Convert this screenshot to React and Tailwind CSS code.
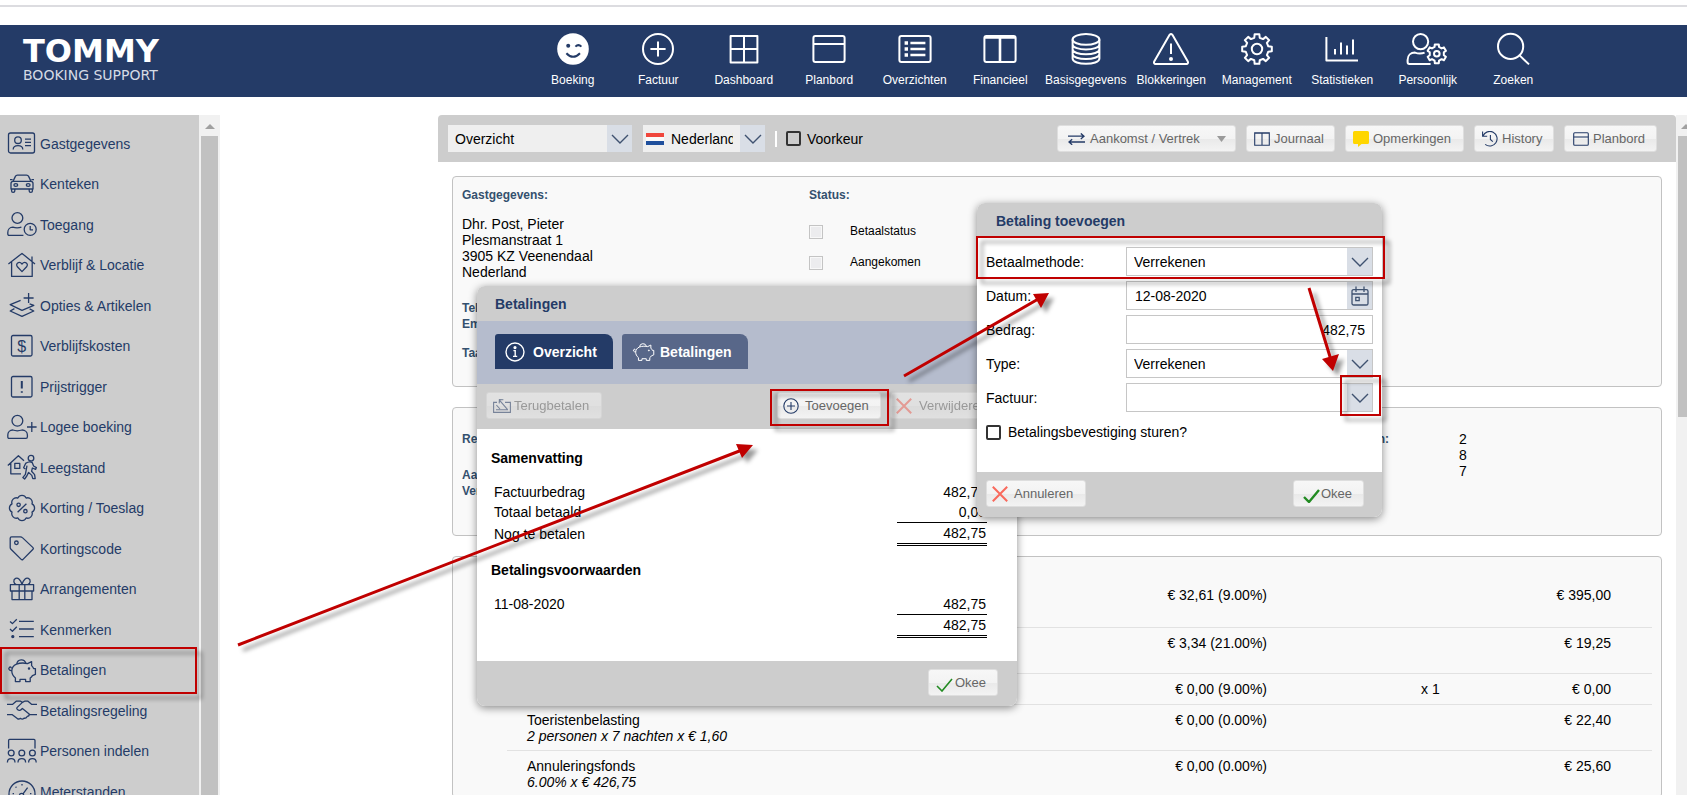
/**
 * Tommy Booking Support
 *
 * Boekingsoverzicht met de dialogen voor betalingen
 */

import React, { useState } from 'react';
import clsx from 'clsx';

// Closed outline of a toothed wheel around (cx, cy)
const gearPath = (cx, cy, outer, inner, teeth) => {
  const step = (Math.PI * 2) / teeth;
  const points = [];
  for (let i = 0; i < teeth; i++) {
    const mid = i * step - Math.PI / 2;
    [
      [-0.3, inner],
      [-0.2, outer],
      [0.2, outer],
      [0.3, inner]
    ].forEach(([t, r]) => {
      const a = mid + t * step;
      points.push(`${(cx + r * Math.cos(a)).toFixed(2)} ${(cy + r * Math.sin(a)).toFixed(2)}`);
    });
  }
  return `M${points.join('L')}Z`;
};

// Scalloped badge outline around (cx, cy)
const badgePath = (cx, cy, radius, bumps) => {
  const step = (Math.PI * 2) / bumps;
  const point = i => {
    const a = (i + 0.5) * step;
    return `${(cx + radius * Math.cos(a)).toFixed(2)} ${(cy + radius * Math.sin(a)).toFixed(2)}`;
  };
  let d = `M${point(0)}`;
  for (let i = 1; i <= bumps; i++) d += `A4.6 4.6 0 0 1 ${point(i)}`;
  return `${d}Z`;
};

const PIG = (
  <>
    <path d="M9.5 9.2C13 7.8 18 8 20.5 8.6L24.6 6.6V10.6C25.6 11.6 26.2 12.6 26.6 13.6H28.4V19.4L25.4 20.6C24.8 21.6 24 22.4 23.2 23V26.6H18.6V24.4H13V26.6H8.4V23C6 21 4.8 18.6 4.8 16C4.8 13 6.6 10.4 9.5 9.2Z" />
    <path d="M9.8 8.8A4.6 4.6 0 0 1 18.8 8.2M4.9 15.4C2 16 1 13.4 2.6 12.2C3.8 11.6 4.6 12.6 4 13.4" />
    <circle cx="22" cy="13.6" r="0.6" fill="currentColor" />
  </>
);

const SIDE_ICONS = {
  card: (
    <>
      <rect x="1.5" y="4" width="26" height="20" rx="2" />
      <circle cx="11" cy="11.2" r="3.3" />
      <path d="M6.2 20.5C6.2 17.4 7.8 16.6 11 16.6S15.8 17.4 15.8 20.5M18 10.2H24M18 13.4H24M18 16.6H24" />
    </>
  ),
  car: (
    <>
      <path d="M6 12.4L8.4 7.4Q9 6.2 10.4 6.2H19.6Q21 6.2 21.6 7.4L24 12.4M6 12.4H24Q26 12.4 26 14.6V20H4V14.6Q4 12.4 6 12.4ZM3 10.6H5.6M24.4 10.6H27" />
      <path d="M4.6 20V22Q4.6 23.4 6 23.4T7.8 22V20M22.2 20V22Q22.2 23.4 23.8 23.4T25.4 22V20" />
      <ellipse cx="8.8" cy="16" rx="1.9" ry="1.3" />
      <ellipse cx="21.2" cy="16" rx="1.9" ry="1.3" />
    </>
  ),
  userClock: (
    <>
      <circle cx="10.4" cy="8" r="5.4" />
      <path d="M16.4 25.4H2.2Q.8 25.4 .8 24V22.4C.8 19.2 3 17.2 5.8 17.2C8.6 18.2 11.6 18.2 14.4 17.2" />
      <circle cx="23.2" cy="19.4" r="6" />
      <path d="M23.2 16V19.8H26" />
    </>
  ),
  house: (
    <>
      <path d="M1.4 14L15 3.4L28 14M25 11.4V6.4M4.6 12V26.4H25.2V12" />
      <path d="M15 21.6L10.4 16.8C8 14 12 10.4 15 14C18 10.4 22 14 19.6 16.8Z" />
    </>
  ),
  layers: (
    <path d="M21.6 2V12M16.6 7H26.6M13.6 9.4L3.2 13.6L15 19.4L26.8 14.4L22.6 12.8M7.4 17.6L3.2 20L15 25.4L26.8 20L22.6 17.8" />
  ),
  dollar: (
    <>
      <rect x="4.5" y="4.5" width="20.5" height="20.5" rx="1.5" />
      <text x="14.8" y="20.5" textAnchor="middle" fontSize="16" fill="currentColor" stroke="none">$</text>
    </>
  ),
  alert: (
    <>
      <rect x="4.5" y="4.5" width="20.5" height="20.5" rx="1.5" />
      <path d="M14.8 9V16.6M14.8 19.2V20.8" strokeWidth="2" />
    </>
  ),
  userPlus: (
    <>
      <circle cx="10.4" cy="8.8" r="5.4" />
      <path d="M5.8 18C8.6 19 12 19 15 18C18 18 20.4 20 20.4 23V24.8Q20.4 26.4 19 26.4H2.2Q.8 26.4 .8 24.8V23C.8 20 3 18 5.8 18ZM24.8 10V20M20 15H29.6" />
    </>
  ),
  vacancy: (
    <>
      <path d="M.8 12.4L11.4 2.8L17 7.8M3.8 10V20.8H14M7.8 10.4H12.8V15.4H7.8Z" />
      <circle cx="24" cy="5.2" r="2.8" />
      <path d="M18.4 16L16.6 14.8L18.6 10.4Q22.4 8 25.2 9.6L26.6 13L29.4 14.6L28.6 16.4L25.4 15L24.6 18.2L27.6 21.6L28.2 25.6H25.8L24.8 22.4L21.6 19.4L19.8 23L17.6 26L15.8 24.6L18.4 21.4L20 12.6" />
    </>
  ),
  badge: (
    <>
      <path d={badgePath(15, 15, 10.8, 8)} />
      <circle cx="11.6" cy="11.8" r="1.7" />
      <circle cx="18.4" cy="18.2" r="1.7" />
      <path d="M19.4 10.8L10.6 19.2" />
    </>
  ),
  tag: (
    <>
      <path d="M4.6 2.8H13.4Q14.6 2.8 15.4 3.6L26 13.6Q26.8 14.4 26 15.2L16 25.4Q15 26.2 14.2 25.4L4 15.2Q3.2 14.4 3.2 13.4V4.2Q3.2 2.8 4.6 2.8Z" />
      <circle cx="9.4" cy="8.8" r="1.8" />
    </>
  ),
  gift: (
    <>
      <path d="M3.4 10.6H26.6V17H3.4ZM5 17V25.6H25V17M12.2 10.6V25.6M17.8 10.6V25.6" />
      <path d="M15 10.4C13.6 5.4 11 3.4 8.6 4.4C5.8 5.8 6.6 9.4 9 10.4M15 10.4C16.4 5.4 19 3.4 21.4 4.4C24.2 5.8 23.4 9.4 21 10.4" />
    </>
  ),
  checklist: (
    <>
      <path d="M12 6.4H26.8M12 14H26.8M12 21.6H26.8M3 6.4L5.4 8.6L9.8 4.2M3 14L5.4 16.2L9.8 11.8" />
      <circle cx="5.8" cy="21.6" r="1" fill="currentColor" />
    </>
  ),
  pig: PIG,
  handshake: (
    <path d="M0 8.4H5.4L9.2 5.2H13.6L15.4 6.4L17.6 5.2H21L24.8 8.4H30M0 18.6H5L10.6 22.8Q12 23.4 13.4 22.4Q15.4 23.8 17 22.2Q19.6 22.6 20.2 20.4Q22.4 20.2 22.2 18L15.4 12.4Q13 15.6 10.4 13.6Q9.4 12.8 10 11.6L15.4 6.4M22.4 18.6H30" />
  ),
  people: (
    <>
      <path d="M1.6 12.4V4.4Q1.6 3.4 2.6 3.4H27Q28 3.4 28 4.4V12.4" />
      <circle cx="4.2" cy="17" r="2.9" />
      <circle cx="14.8" cy="17" r="2.9" />
      <circle cx="25.4" cy="17" r="2.9" />
      <path d="M.4 26.4C.4 23.6 2 22.6 4.2 22.6S8 23.6 8 26.4M11 26.4C11 23.6 12.6 22.6 14.8 22.6S18.6 23.6 18.6 26.4M21.6 26.4C21.6 23.6 23.2 22.6 25.4 22.6S29.2 23.6 29.2 26.4" />
    </>
  ),
  gauge: (
    <>
      <circle cx="15" cy="17" r="13" />
      <circle cx="14.6" cy="18.6" r="2.2" />
      <path d="M16 16.8L20.6 10.6M15 7V8.4M8.6 9.8L9.4 10.6M5.6 16.6H7M23 16.6H24.4" />
    </>
  )
};

const NAV_ICONS = {
  smile: (
    <>
      <circle cx="20" cy="16" r="15.8" fill="currentColor" stroke="none" />
      <circle cx="15.2" cy="12.8" r="2" fill="#243b67" stroke="none" />
      <path d="M22.4 13.6Q25.4 10.6 28.4 13.6M13.4 20.2Q20 27.4 27 20.2" stroke="#243b67" />
    </>
  ),
  plus: (
    <>
      <circle cx="20" cy="16" r="15" />
      <path d="M20 8.4V23.6M12.4 16H27.6" />
    </>
  ),
  grid: <path d="M6.6 3H33.4V29.4H6.6ZM20 3V29.4M6.6 16H33.4" />,
  window: (
    <>
      <rect x="4.4" y="3" width="31.2" height="26" rx="2" />
      <path d="M4.4 11H35.6" />
    </>
  ),
  list: (
    <>
      <rect x="4.4" y="3" width="31.2" height="26" rx="2" />
      <path d="M15.4 10H30.4M15.4 16H30.4M15.4 22H30.4" strokeWidth="2.4" />
      <path d="M9.6 10H13M9.6 16H13M9.6 22H13" strokeWidth="3.6" />
    </>
  ),
  columns: (
    <>
      <rect x="4.4" y="3" width="31.2" height="26" rx="2" />
      <path d="M4.4 4.4H35.6M20 4V29" strokeWidth="2.6" />
    </>
  ),
  database: (
    <>
      <ellipse cx="20" cy="6.4" rx="13.4" ry="5.4" />
      <path d="M6.6 6.4V25.6C6.6 32.6 33.4 32.6 33.4 25.6V6.4M6.6 11.2C6.6 18.2 33.4 18.2 33.4 11.2M6.6 16C6.6 23 33.4 23 33.4 16M6.6 20.8C6.6 27.8 33.4 27.8 33.4 20.8" />
    </>
  ),
  warning: (
    <>
      <path d="M18.6 1.8Q20 .2 21.4 1.8L36.8 28.4Q37.6 30.8 35.4 31H4.6Q2.4 30.8 3.2 28.4Z" />
      <path d="M20 10.6V21" />
      <circle cx="20" cy="26" r="1" fill="currentColor" />
    </>
  ),
  gear: (
    <>
      <path d={gearPath(20, 16, 15, 11.6, 8)} />
      <circle cx="20" cy="16" r="5.2" />
    </>
  ),
  stats: <path d="M4.4 4V27.4H36M13 21.4V16M19 21.4V9.4M25 21.4V12.4M31 21.4V6.6" />,
  userGear: (
    <>
      <circle cx="12.6" cy="8.6" r="7.6" />
      <path d="M22.6 31H1.4Q-.4 31 -.4 29V27C-.4 22 3 19.6 7 19.6Q12 21.4 16.6 19.6" />
      <path d={gearPath(28.8, 20.8, 9.6, 7.2, 6)} />
      <circle cx="28.8" cy="20.8" r="2.8" />
    </>
  ),
  search: (
    <>
      <circle cx="17.6" cy="13.4" r="12.6" />
      <path d="M26.6 22.4L36 31.4" />
    </>
  )
};

const navItems = [
  { label: 'Boeking', icon: 'smile' },
  { label: 'Factuur', icon: 'plus' },
  { label: 'Dashboard', icon: 'grid' },
  { label: 'Planbord', icon: 'window' },
  { label: 'Overzichten', icon: 'list' },
  { label: 'Financieel', icon: 'columns' },
  { label: 'Basisgegevens', icon: 'database' },
  { label: 'Blokkeringen', icon: 'warning' },
  { label: 'Management', icon: 'gear' },
  { label: 'Statistieken', icon: 'stats' },
  { label: 'Persoonlijk', icon: 'userGear' },
  { label: 'Zoeken', icon: 'search' }
];

const sideItems = [
  { label: 'Gastgegevens', icon: 'card' },
  { label: 'Kenteken', icon: 'car' },
  { label: 'Toegang', icon: 'userClock' },
  { label: 'Verblijf & Locatie', icon: 'house' },
  { label: 'Opties & Artikelen', icon: 'layers' },
  { label: 'Verblijfskosten', icon: 'dollar' },
  { label: 'Prijstrigger', icon: 'alert' },
  { label: 'Logee boeking', icon: 'userPlus' },
  { label: 'Leegstand', icon: 'vacancy' },
  { label: 'Korting / Toeslag', icon: 'badge' },
  { label: 'Kortingscode', icon: 'tag' },
  { label: 'Arrangementen', icon: 'gift' },
  { label: 'Kenmerken', icon: 'checklist' },
  { label: 'Betalingen', icon: 'pig' },
  { label: 'Betalingsregeling', icon: 'handshake' },
  { label: 'Personen indelen', icon: 'people' },
  { label: 'Meterstanden', icon: 'gauge' }
];

const priceRows = [
  { vat: '€ 32,61 (9.00%)', total: '€ 395,00', height: 'h-[47px]' },
  { vat: '€ 3,34 (21.00%)', total: '€ 19,25', height: 'h-[46px]' },
  { vat: '€ 0,00 (9.00%)', count: 'x 1', total: '€ 0,00', height: 'h-[31px]' },
  {
    name: 'Toeristenbelasting',
    detail: '2 personen x 7 nachten x € 1,60',
    vat: '€ 0,00 (0.00%)',
    total: '€ 22,40',
    height: 'h-[46px]'
  },
  {
    name: 'Annuleringsfonds',
    detail: '6.00% x € 426,75',
    vat: '€ 0,00 (0.00%)',
    total: '€ 25,60',
    height: 'h-[46px]'
  }
];

const SideIcon = ({ name, className = 'size-[30px]' }) => (
  <svg
    viewBox="0 0 30 30"
    className={clsx('shrink-0 overflow-visible', className)}
    fill="none"
    stroke="currentColor"
    strokeWidth="1.3"
    strokeLinejoin="round"
    aria-hidden="true"
  >
    {SIDE_ICONS[name]}
  </svg>
);

const Chevron = () => (
  <span className="pointer-events-none flex w-[25px] shrink-0 items-center justify-center self-stretch bg-[#d9dee6]">
    <svg viewBox="0 0 18 10" className="h-[10px] w-[18px]" fill="none" stroke="#3f5270" strokeWidth="1.4" aria-hidden="true">
      <path d="M1 1L9 9L17 1" />
    </svg>
  </span>
);

const Button = ({ className, disabled, children }) => (
  <button
    type="button"
    disabled={disabled}
    className={clsx(
      'flex h-[27px] shrink-0 items-center rounded-[3px] border border-[#dedede] bg-[linear-gradient(#f7f7f7_0%,#f3f3f3_50%,#e9e9e9_51%,#f3f3f3_100%)] text-[13px] whitespace-nowrap text-[#666666]',
      disabled && 'opacity-50',
      className
    )}
  >
    {children}
  </button>
);

const Cross = () => (
  <svg viewBox="0 0 16 16" className="size-4" fill="none" stroke="#f9695c" strokeWidth="2" aria-hidden="true">
    <path d="M.8 .8L15.2 15.2M15.2 .8L.8 15.2" />
  </svg>
);

const Check = ({ thick }) => (
  <svg viewBox="0 0 17 14" className="mt-1 h-[14px] w-[17px]" fill="none" stroke="#228b22" strokeWidth={thick ? 2.4 : 1.6} aria-hidden="true">
    <path d="M1 8L6 13L16 1" />
  </svg>
);

const ArrowUp = () => (
  <svg viewBox="0 0 10 5" className="h-[5px] w-[10px] shrink-0" fill="#a0a0a0" aria-hidden="true">
    <path d="M5 0L10 5H0Z" />
  </svg>
);

const Header = () => (
  <header className="flex h-[72px] shrink-0 bg-[#243b67] text-white">
    <a href="#" className="flex w-[530px] shrink-0 flex-col pt-[10px] pl-[23px] font-['DejaVu_Sans']">
      <span className="text-[32px] leading-8 font-bold">TOMMY</span>
      <span className="text-sm leading-4 text-[#d5dae4]">BOOKING SUPPORT</span>
    </a>
    <nav className="grid w-[1026px] grid-cols-12 pt-2">
      {navItems.map(item => (
        <a key={item.label} href="#" className="flex flex-col items-center gap-[7px]">
          <svg
            viewBox="0 0 40 32"
            className="h-8 w-10 overflow-visible"
            fill="none"
            stroke="currentColor"
            strokeWidth="2"
            strokeLinejoin="round"
            aria-hidden="true"
          >
            {NAV_ICONS[item.icon]}
          </svg>
          <span className="text-xs leading-4">{item.label}</span>
        </a>
      ))}
    </nav>
  </header>
);

const Sidebar = () => (
  <aside className="flex w-[220px] shrink-0">
    <nav className="flex-1 bg-[#cdcdcd] pt-2 text-[#243b67]">
      {sideItems.map(item => (
        <a key={item.label} href="#" className="flex items-center gap-[3px] pl-[7px] text-sm odd:h-[41px] even:h-10">
          <SideIcon name={item.icon} />
          {item.label}
        </a>
      ))}
    </nav>
    <div className="flex w-[21px] flex-col items-center bg-[#f1f1f1] pt-[9px]">
      <ArrowUp />
      <div className="mt-[7px] w-[17px] flex-1 bg-[#c1c1c1]" />
    </div>
  </aside>
);

const Toolbar = () => (
  <div className="flex h-[47px] shrink-0 items-center rounded-t bg-[#cdcdcd] pr-[19px] pl-[10px]">
    <div className="flex h-[27px] w-[184px] bg-[#efefef]">
      <select aria-label="Weergave" className="min-w-0 flex-1 appearance-none pl-[7px] text-sm">
        <option>Overzicht</option>
      </select>
      <Chevron />
    </div>
    <div className="ml-[11px] flex h-[27px] w-[122px] items-center bg-[#efefef] pl-[3px]">
      <svg viewBox="0 0 18 12" className="h-3 w-[18px] shrink-0" aria-hidden="true">
        <rect width="18" height="4" fill="#f0463c" />
        <rect y="4" width="18" height="4" fill="#fafafa" />
        <rect y="8" width="18" height="4" fill="#1f4f9c" />
      </svg>
      <select aria-label="Taal" className="mr-[7px] ml-[7px] w-[62px] shrink-0 appearance-none overflow-hidden text-sm text-clip">
        <option>Nederlands</option>
      </select>
      <Chevron />
    </div>
    <span className="ml-[10px] h-4 w-[2px] bg-white" />
    <label className="ml-[9px] flex items-center gap-[6px] text-sm">
      <input type="checkbox" className="size-[15px] appearance-none rounded-[2px] border-2 border-[#333333]" />
      Voorkeur
    </label>
    <div className="ml-auto flex gap-[10px]">
      <Button className="w-[179px] pl-[10px]">
        <svg viewBox="0 0 17 12" className="mr-[5px] h-3 w-[17px]" fill="none" stroke="#243b67" strokeWidth="1.3" aria-hidden="true">
          <path d="M0 3.2H16M12.8 .4L16 3.2L12.8 6M17 9H1M4.2 6.2L1 9L4.2 11.8" />
        </svg>
        Aankomst / Vertrek
        <svg viewBox="0 0 9 6" className="mr-[9px] ml-auto h-[6px] w-[9px]" fill="#9a9a9a" aria-hidden="true">
          <path d="M0 0H9L4.5 6Z" />
        </svg>
      </Button>
      <Button className="w-[89px] gap-[4px] pl-[7px]">
        <svg viewBox="0 0 16 14" className="h-[14px] w-4" fill="none" stroke="#243b67" strokeWidth="1.1" aria-hidden="true">
          <path d="M.7 .7H15.3V13.3H.7ZM8 .7V13.3M.7 1.2H15.3" />
        </svg>
        Journaal
      </Button>
      <Button className="w-[119px] gap-[4px] pl-[7px]">
        <svg viewBox="0 0 16 16" className="size-4" fill="#ffd600" aria-hidden="true">
          <path d="M1.5 0H14.5Q16 0 16 1.5V11.5Q16 13 14.5 13H8.5L5 16V13H1.5Q0 13 0 11.5V1.5Q0 0 1.5 0Z" />
        </svg>
        Opmerkingen
      </Button>
      <Button className="w-[80px] gap-[4px] pl-[7px]">
        <svg viewBox="0 0 16 16" className="size-4" fill="none" stroke="#243b67" strokeWidth="1.1" aria-hidden="true">
          <path d="M.6 .6V5.2H5.2M1 5A7.3 7.3 0 1 1 3.2 13.4M8.4 4V8.4L10.8 10.6" />
        </svg>
        History
      </Button>
      <Button className="w-[93px] gap-[4px] pl-2">
        <svg viewBox="0 0 16 14" className="h-[14px] w-4" fill="none" stroke="#243b67" strokeWidth="1.1" aria-hidden="true">
          <rect x=".7" y=".7" width="14.6" height="12.6" rx="1" />
          <path d="M.7 5H15.3" />
        </svg>
        Planbord
      </Button>
    </div>
  </div>
);

const Panel = ({ className, children }) => (
  <section className={clsx('rounded border border-[#c2c2c2] bg-[#f9f9f9]', className)}>{children}</section>
);

const heading = 'text-xs leading-4 font-bold text-[#34506e]';

const Overview = () => (
  <div className="flex flex-1 flex-col gap-5 overflow-hidden pt-[14px] pr-[14px] pl-[14px]">
    <Panel className="flex min-h-[211px] px-[9px] pt-[10px]">
      <div className="w-[347px] shrink-0">
        <h2 className={heading}>Gastgegevens:</h2>
        <address className="mt-[13px] text-sm leading-4 not-italic">
          Dhr. Post, Pieter
          <br />
          Plesmanstraat 1
          <br />
          3905 KZ Veenendaal
          <br />
          Nederland
        </address>
        <p className={clsx(heading, 'mt-5')}>Telefoon:</p>
        <p className={heading}>Email:</p>
        <p className={clsx(heading, 'mt-[13px]')}>Taal:</p>
      </div>
      <div>
        <h2 className={heading}>Status:</h2>
        <div className="mt-[21px] flex flex-col gap-[15px]">
          {['Betaalstatus', 'Aangekomen'].map(status => (
            <label key={status} className="flex h-4 gap-[27px] text-xs leading-[14px]">
              <input
                type="checkbox"
                className="mt-px size-[14px] appearance-none border border-[#c4c4c4] bg-[#ececee] shadow-[inset_0_0_0_1px_#f8f8f8]"
              />
              {status}
            </label>
          ))}
        </div>
      </div>
    </Panel>

    <Panel className="flex min-h-[129px] px-[9px] pt-[23px]">
      <div className="w-[829px] shrink-0">
        <p className={heading}>Reservering:</p>
        <p className={clsx(heading, 'mt-5')}>Aankomst:</p>
        <p className={heading}>Vertrek:</p>
      </div>
      <dl className="grid auto-rows-[16px] grid-cols-[168px_auto] text-sm leading-4">
        <dt className={heading}>Aantal personen:</dt>
        <dd>2</dd>
        <dt className={heading}>Dagen:</dt>
        <dd>8</dd>
        <dt className={heading}>Nachten:</dt>
        <dd>7</dd>
      </dl>
    </Panel>

    <Panel className="flex-1 pt-[23px] pr-[9px] pl-[54px]">
      <table className="w-full table-fixed text-sm leading-4">
        <colgroup>
          <col />
          <col className="w-[173px]" />
          <col className="w-[384px]" />
        </colgroup>
        <tbody>
          {priceRows.map(row => (
            <tr key={row.total} className={clsx('border-b border-[#e2e2e2] align-top', row.height)}>
              <td className="pt-[7px] pl-5">
                {row.name}
                <div className="italic">{row.detail}</div>
              </td>
              <td className="pt-[7px] pr-px text-right">{row.vat}</td>
              <td className="pt-[7px]">
                <div className="flex justify-between pr-[41px] pl-[153px]">
                  <span>{row.count}</span>
                  <span>{row.total}</span>
                </div>
              </td>
            </tr>
          ))}
        </tbody>
      </table>
    </Panel>
  </div>
);

const SumTable = ({ rows, total, totalLabel, label }) => (
  <table aria-label={label} className="w-full text-sm leading-5">
    <tbody>
      {rows.map(([name, amount]) => (
        <tr key={name}>
          <td className="pl-[3px]">{name}</td>
          <td className="w-[90px] pr-px text-right">{amount}</td>
        </tr>
      ))}
      <tr>
        <td className="pl-[3px]">{totalLabel}</td>
        <td className="border-t border-b-3 border-black [border-bottom-style:double] pr-px text-right">{total}</td>
      </tr>
    </tbody>
  </table>
);

const PaymentsDialog = () => {
  const [tab, setTab] = useState('overzicht');

  const tabs = [
    { id: 'overzicht', label: 'Overzicht' },
    { id: 'betalingen', label: 'Betalingen' }
  ];

  return (
    <div
      role="dialog"
      aria-label="Betalingen"
      className="absolute top-[286px] left-[477px] flex w-[540px] flex-col overflow-hidden rounded-lg bg-white shadow-[0_2px_8px_rgba(0,0,0,0.45)]"
    >
      <h2 className="h-[35px] bg-[#cdcdcd] pl-[18px] text-sm leading-[36px] font-bold text-[#243b67]">Betalingen</h2>
      <div className="flex h-[63px] gap-[9px] bg-[#b5bccd] pt-[13px] pl-[18px]">
        {tabs.map(item => (
          <button
            key={item.id}
            type="button"
            onClick={() => setTab(item.id)}
            className={clsx(
              'flex h-[35px] items-center rounded-tl-[3px] rounded-tr-[8px] px-[10px] text-sm font-bold text-white',
              tab === item.id ? 'w-[118px] bg-[#243b67]' : 'w-[126px] bg-[#586789]'
            )}
          >
            {item.id === 'overzicht' ? (
              <svg viewBox="0 0 20 20" className="mr-[8px] size-5" fill="none" stroke="currentColor" strokeWidth="1.4" aria-hidden="true">
                <circle cx="10" cy="10" r="9" />
                <path d="M8.4 8.6H10.2V14M8 14.4H12.2" />
                <circle cx="10" cy="5.6" r=".9" fill="currentColor" />
              </svg>
            ) : (
              <SideIcon name="pig" className="mr-[5px] size-[23px]" />
            )}
            {item.label}
          </button>
        ))}
      </div>
      <div className="flex h-[45px] items-center bg-[#cdcdcd] pb-[2px] pl-[9px]">
        <Button disabled className="w-[116px] gap-[3px] pl-[6px]">
          <svg viewBox="0 0 18 14" className="h-[14px] w-[18px]" fill="none" stroke="#243b67" strokeWidth="1.1" aria-hidden="true">
            <path d="M4 3.4H.6V13.4H17.4V3.4H12M6 .6L14.4 10.4M10.4 .8L6.4 .6L6.2 4.4M3 10.8H15M3.4 6L7 10" />
          </svg>
          Terugbetalen
        </Button>
        <Button className="ml-[175px] w-[104px] pl-[5px]">
          <svg viewBox="0 0 16 16" className="mr-[6px] size-4" fill="none" stroke="#243b67" strokeWidth="1.1" aria-hidden="true">
            <circle cx="8" cy="8" r="7.2" />
            <path d="M8 4V12M4 8H12" />
          </svg>
          Toevoegen
        </Button>
        <Button disabled className="ml-[9px] w-[110px] gap-[7px] pl-[5px]">
          <Cross />
          Verwijderen
        </Button>
      </div>
      <div className="h-[232px] pt-[21px] pr-[30px] pl-[14px]">
        <h3 className="text-sm leading-4 font-bold">Samenvatting</h3>
        <div className="mt-4">
          <SumTable
            label="Samenvatting"
            rows={[
              ['Factuurbedrag', '482,75'],
              ['Totaal betaald', '0,00']
            ]}
            totalLabel="Nog te betalen"
            total="482,75"
          />
        </div>
        <h3 className="mt-4 text-sm leading-4 font-bold">Betalingsvoorwaarden</h3>
        <div className="mt-4">
          <SumTable label="Betalingsvoorwaarden" rows={[['11-08-2020', '482,75']]} total="482,75" />
        </div>
      </div>
      <div className="flex h-[45px] items-center justify-end bg-[#cdcdcd] pr-[19px] pb-[2px]">
        <Button className="w-[70px] gap-[2px] pl-[7px]">
          <Check />
          Okee
        </Button>
      </div>
    </div>
  );
};

const Field = ({ id, label, children }) => (
  <div className="flex h-[29px] items-center text-sm">
    <label htmlFor={id} className="w-[140px] shrink-0">
      {label}
    </label>
    <div className="flex h-[29px] min-w-0 flex-1 border border-[#c6c6c6] bg-white">{children}</div>
  </div>
);

const AddPaymentDialog = () => (
  <div
    role="dialog"
    aria-label="Betaling toevoegen"
    className="absolute top-[203px] left-[977px] flex w-[405px] flex-col overflow-hidden rounded-lg bg-white shadow-[0_2px_8px_rgba(0,0,0,0.45)]"
  >
    <h2 className="h-[33px] bg-[#cdcdcd] pl-[19px] text-sm leading-[36px] font-bold text-[#243b67]">Betaling toevoegen</h2>
    <form className="flex h-[236px] flex-col gap-[5px] pt-[11px] pr-[9px] pl-[9px]">
      <Field id="methode" label="Betaalmethode:">
        <select id="methode" className="min-w-0 flex-1 appearance-none pl-[7px]">
          <option>Verrekenen</option>
        </select>
        <Chevron />
      </Field>
      <Field id="datum" label="Datum:">
        <input id="datum" type="text" defaultValue="12-08-2020" className="min-w-0 flex-1 pl-[8px]" />
        <button type="button" aria-label="Kies datum" className="flex w-[25px] items-center justify-center bg-[#d9dee6]">
          <svg viewBox="0 0 18 20" className="h-5 w-[18px]" fill="none" stroke="#3f5270" strokeWidth="1.3" aria-hidden="true">
            <rect x="1" y="3.6" width="16" height="15.4" rx="1.6" />
            <path d="M1 8H17M5 .6V6M13 .6V6M4.8 11.4H8.2V14.6H4.8Z" />
          </svg>
        </button>
      </Field>
      <Field id="bedrag" label="Bedrag:">
        <input id="bedrag" type="text" defaultValue="482,75" className="min-w-0 flex-1 pr-[7px] text-right" />
      </Field>
      <Field id="type" label="Type:">
        <select id="type" className="min-w-0 flex-1 appearance-none pl-[7px]">
          <option>Verrekenen</option>
        </select>
        <Chevron />
      </Field>
      <Field id="factuur" label="Factuur:">
        <select id="factuur" className="min-w-0 flex-1 appearance-none pl-[7px]">
          <option></option>
        </select>
        <Chevron />
      </Field>
      <label className="mt-[5px] flex items-center gap-[7px] text-sm">
        <input type="checkbox" className="size-[15px] appearance-none rounded-[2px] border-2 border-[#333333]" />
        Betalingsbevestiging sturen?
      </label>
    </form>
    <div className="flex h-[45px] items-center justify-between bg-[#cdcdcd] pr-[18px] pb-[2px] pl-[9px]">
      <Button className="w-[100px] gap-[6px] pl-[5px]">
        <Cross />
        Annuleren
      </Button>
      <Button className="w-[71px] gap-px pl-[9px]">
        <Check thick />
        Okee
      </Button>
    </div>
  </div>
);

/* Red frames and arrows that point out the steps */
const Annotations = () => (
  <svg
    className="pointer-events-none absolute inset-0 size-full drop-shadow-[5px_5px_2px_rgba(0,0,0,0.4)]"
    fill="none"
    stroke="#c00000"
    strokeWidth="2"
    aria-hidden="true"
  >
    <rect x="1" y="648" width="195" height="45" />
    <rect x="771" y="390" width="117" height="35" />
    <rect x="977" y="237" width="407" height="41" />
    <rect x="1341" y="376" width="39" height="39" />
    <path d="M238 645L742 450M904 376L1040 298M1309 288L1331 360" strokeWidth="3" />
    <path d="M753 445L736 444L742 458ZM1049 293L1033 294L1041 308ZM1333 371L1322 359L1339 354Z" fill="#c00000" stroke="none" />
  </svg>
);

export default function App() {
  return (
    <div className="relative flex h-screen flex-col overflow-hidden bg-white font-['Liberation_Sans',Arial,sans-serif] text-black">
      <div className="mt-[5px] mb-[18px] h-[2px] shrink-0 bg-[#dcdce0]" />
      <Header />
      <div className="mt-[18px] flex min-h-0 flex-1">
        <Sidebar />
        <main className="ml-[218px] flex min-w-0 flex-1 flex-col">
          <Toolbar />
          <Overview />
        </main>
        <div className="flex w-[11px] shrink-0 flex-col overflow-hidden bg-[#f1f1f1] pt-[9px] pl-[2px]">
          <div className="pl-[3px]">
            <ArrowUp />
          </div>
          <div className="mt-[7px] h-[281px] bg-[#c1c1c1]" />
        </div>
      </div>
      <PaymentsDialog />
      <AddPaymentDialog />
      <Annotations />
    </div>
  );
}
